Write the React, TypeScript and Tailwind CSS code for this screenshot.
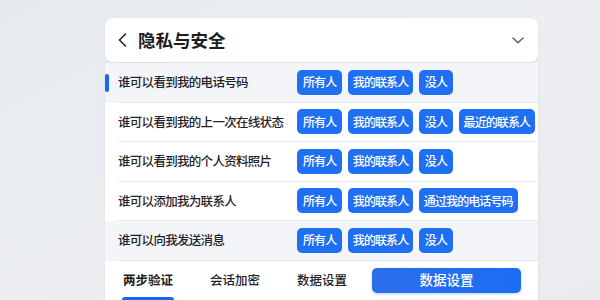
import React from "react"

type Row = { label: string; options: string[]; shaded?: boolean; active?: boolean }

const rows: Row[] = [
  { label: "谁可以看到我的电话号码", options: ["所有人", "我的联系人", "没人"], shaded: true, active: true },
  { label: "谁可以看到我的上一次在线状态", options: ["所有人", "我的联系人", "没人", "最近的联系人"] },
  { label: "谁可以看到我的个人资料照片", options: ["所有人", "我的联系人", "没人"] },
  { label: "谁可以添加我为联系人", options: ["所有人", "我的联系人", "通过我的电话号码"] },
  { label: "谁可以向我发送消息", options: ["所有人", "我的联系人", "没人"], shaded: true },
]

function ChevronLeft() {
  return (
    <svg width="9" height="14" viewBox="0 0 9 14" fill="none">
      <path d="M7.5 1 L1.5 7 L7.5 13" stroke="#1f2329" strokeWidth="1.6" strokeLinecap="round" strokeLinejoin="round" />
    </svg>
  )
}

function ChevronDown() {
  return (
    <svg width="12" height="7" viewBox="0 0 12 7" fill="none">
      <path d="M1 1 L6 5.8 L11 1" stroke="#5a5f66" strokeWidth="1.5" strokeLinecap="round" strokeLinejoin="round" />
    </svg>
  )
}

export default function App() {
  return (
    <div className="w-[600px] h-[300px] overflow-hidden bg-gradient-to-br from-[#e6eaef] via-[#eceef1] to-[#e9ebee] pt-[18px] font-['Noto_Sans_CJK_SC','Noto_Sans',sans-serif]">
      <div className="ml-[105px] w-[433px]">
        {/* Header */}
        <div className="h-[44px] bg-white rounded-lg shadow-[0_1px_4px_rgba(0,0,0,0.06)] flex items-center pl-[13px] pr-[14px]">
          <ChevronLeft />
          <span className="ml-[11px] text-[17.5px] font-bold text-[#1a1d21] leading-none">隐私与安全</span>
          <div className="ml-auto flex items-center">
            <ChevronDown />
          </div>
        </div>

        {/* Options list */}
        <div className="mt-[1px] bg-white shadow-[0_1px_4px_rgba(0,0,0,0.05)]">
          {rows.map((row, i) => (
            <div key={i} className={`relative pl-[13px] ${row.shaded ? "bg-[#f3f5f8]" : "bg-white"}`}>
              {row.active && (
                <div className="absolute left-0 top-[11px] w-[3.5px] h-[18px] rounded-full bg-[#1a66f0]" />
              )}
              <div className="h-[39.5px] flex items-center border-b border-[#e6e9ee]">
                <div className="w-[179px] shrink-0 whitespace-nowrap text-[12.5px] font-medium text-[#1f2329] leading-none tracking-[-0.7px]">
                  {row.label}
                </div>
                <div className="flex items-center gap-[5.5px] whitespace-nowrap">
                  {row.options.map((opt) => (
                    <button
                      key={opt}
                      className={`shrink-0 whitespace-nowrap h-[25px] rounded-[5px] bg-[#1f6ff2] text-white text-[12px] font-medium leading-none tracking-[-0.9px] ${
                        opt.length > 3 ? "px-[5px]" : "px-[6px]"
                      }`}
                    >
                      {opt}
                    </button>
                  ))}
                </div>
              </div>
            </div>
          ))}

          {/* Tabs */}
          <div className="h-[39px] flex items-center pl-[18px] pr-[17px]">
            <div className="relative h-full flex items-center">
              <span className="text-[12.5px] font-bold text-[#1a1d21] leading-none">两步验证</span>
              <div className="absolute bottom-0 left-[-1px] right-[-1px] h-[3px] rounded-t-sm bg-[#1a66f0]" />
            </div>
            <span className="ml-[37px] text-[12.5px] font-medium text-[#1f2329] leading-none">会话加密</span>
            <span className="ml-[37px] text-[12.5px] font-medium text-[#1f2329] leading-none">数据设置</span>
            <button className="ml-auto w-[149px] h-[25px] rounded-[5px] bg-gradient-to-r from-[#2a6fe9] to-[#1b6cf6] text-white text-[13.5px] font-medium leading-none shadow-[0_1px_3px_rgba(30,100,240,0.3)]">
              数据设置
            </button>
          </div>
        </div>
      </div>
    </div>
  )
}
